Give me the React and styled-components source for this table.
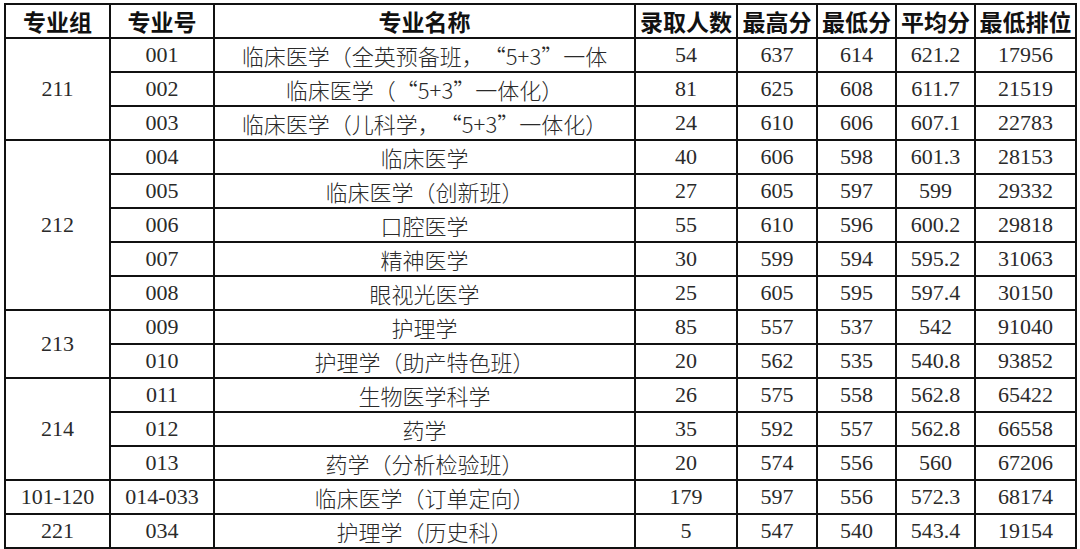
import React from "react";
import styled, { createGlobalStyle } from "styled-components";

const Global = createGlobalStyle`
  html, body {
    margin: 0;
    background: #fff;
  }
`;

const Page = styled.div`
  width: 1080px;
  height: 549px;
  padding: 3px 0 0 4px;
  box-sizing: border-box;
  overflow: hidden;
`;

const Table = styled.table`
  border-collapse: collapse;
  table-layout: fixed;
  width: 1071px;
  border: 2px solid #111;
`;

const Row = styled.tr`
  height: 34px;
`;

const Head = styled.th`
  border: 2px solid #111;
  padding: 0;
  font-family: "Noto Sans CJK SC", sans-serif;
  font-weight: 700;
  font-size: 23px;
  line-height: 30px;
  color: #111;
  white-space: nowrap;
  overflow: hidden;
`;

const Cell = styled.td`
  border: 2px solid #111;
  padding: 0;
  text-align: center;
  vertical-align: middle;
  font-family: ${(p) =>
    p.$name
      ? '"Noto Sans CJK SC", sans-serif'
      : '"Liberation Serif", "Noto Sans CJK SC", serif'};
  font-size: 22px;
  font-weight: ${(p) => (p.$name ? 300 : 400)};
  color: #2a2a2a;
  white-space: nowrap;
  overflow: hidden;
`;

const Quote = styled.span`
  display: inline-block;
  width: 1em;
  text-align: ${(p) => (p.$open ? "right" : "left")};
`;

const widths = [105, 104, 421, 102, 80, 79, 79, 101];
const heads = ["专业组", "专业号", "专业名称", "录取人数", "最高分", "最低分", "平均分", "最低排位"];

const groups = [
  {
    id: "211",
    rows: [
      ["001", "临床医学（全英预备班，“5+3”一体", "54", "637", "614", "621.2", "17956"],
      ["002", "临床医学（“5+3”一体化）", "81", "625", "608", "611.7", "21519"],
      ["003", "临床医学（儿科学，“5+3”一体化）", "24", "610", "606", "607.1", "22783"],
    ],
  },
  {
    id: "212",
    rows: [
      ["004", "临床医学", "40", "606", "598", "601.3", "28153"],
      ["005", "临床医学（创新班）", "27", "605", "597", "599", "29332"],
      ["006", "口腔医学", "55", "610", "596", "600.2", "29818"],
      ["007", "精神医学", "30", "599", "594", "595.2", "31063"],
      ["008", "眼视光医学", "25", "605", "595", "597.4", "30150"],
    ],
  },
  {
    id: "213",
    rows: [
      ["009", "护理学", "85", "557", "537", "542", "91040"],
      ["010", "护理学（助产特色班）", "20", "562", "535", "540.8", "93852"],
    ],
  },
  {
    id: "214",
    rows: [
      ["011", "生物医学科学", "26", "575", "558", "562.8", "65422"],
      ["012", "药学", "35", "592", "557", "562.8", "66558"],
      ["013", "药学（分析检验班）", "20", "574", "556", "560", "67206"],
    ],
  },
  {
    id: "101-120",
    rows: [["014-033", "临床医学（订单定向）", "179", "597", "556", "572.3", "68174"]],
  },
  {
    id: "221",
    rows: [["034", "护理学（历史科）", "5", "547", "540", "543.4", "19154"]],
  },
];

// full-width curly quotes, as in the source sheet
function Name({ text }) {
  return text.split(/([“”])/).map((part, i) =>
    part === "“" || part === "”" ? (
      <Quote key={i} $open={part === "“"}>
        {part}
      </Quote>
    ) : (
      part
    )
  );
}

export default function App() {
  return (
    <>
      <Global />
      <Page>
        <Table>
          <colgroup>
            {widths.map((w, i) => (
              <col key={i} style={{ width: w }} />
            ))}
          </colgroup>
          <thead>
            <Row>
              {heads.map((h) => (
                <Head key={h}>{h}</Head>
              ))}
            </Row>
          </thead>
          <tbody>
            {groups.map((g) =>
              g.rows.map((r, i) => (
                <Row key={r[0]}>
                  {i === 0 && <Cell rowSpan={g.rows.length}>{g.id}</Cell>}
                  <Cell>{r[0]}</Cell>
                  <Cell $name>
                    <Name text={r[1]} />
                  </Cell>
                  {r.slice(2).map((v, j) => (
                    <Cell key={j}>{v}</Cell>
                  ))}
                </Row>
              ))
            )}
          </tbody>
        </Table>
      </Page>
    </>
  );
}
